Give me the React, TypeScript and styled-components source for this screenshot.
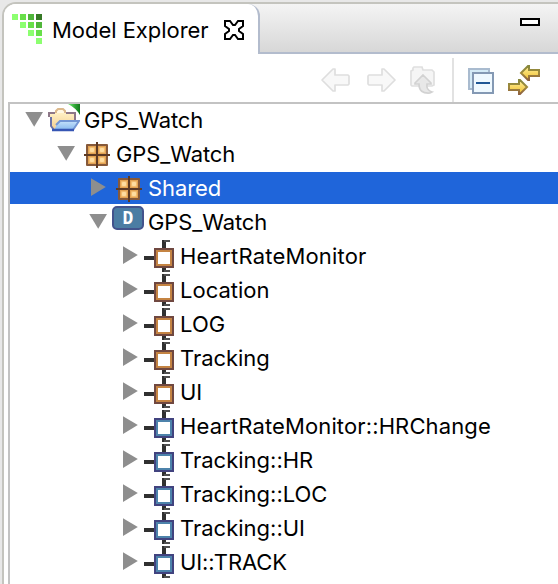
import React from "react";
import styled, { createGlobalStyle } from "styled-components";

const GlobalStyle = createGlobalStyle`
  * { box-sizing: border-box; }
  body { margin: 0; background: #e8e8e8; overflow: hidden; }
`;

const Window = styled.div`
  width: 558px;
  height: 584px;
  padding: 2px 0 0 2px;
  overflow: hidden;
  background: #e8e8e8;
  font-family: Inter, "Liberation Sans", sans-serif;
  font-size: 22px;
  color: #000;
`;

const ViewFrame = styled.div`
  display: flex;
  flex-direction: column;
  height: 582px;
  border: solid #c4c4be;
  border-width: 2px 0 0 2px;
  border-top-left-radius: 14px;
  background: #fff;
  overflow: hidden;
`;

const TabStrip = styled.div`
  display: flex;
  height: 50px;
  background: linear-gradient(#f4f4f4, #d6d6d6);
`;

const Tab = styled.div`
  display: flex;
  flex: none;
  align-items: center;
  width: 256px;
  height: 50px;
  padding: 0 14px 0 8px;
  border-right: 2px solid #b3bccd;
  border-top-right-radius: 12px;
  background: #fff;
`;

const TabTitle = styled.span`
  flex: 1;
  margin-left: 10px;
  line-height: 50px;
  padding-top: 2px;
  letter-spacing: -0.04px;
  white-space: nowrap;
`;

const StripRest = styled.div`
  display: flex;
  flex: 1;
  justify-content: flex-end;
  padding: 14px 18px 0 0;
  border-bottom: 2px solid #b3bccd;
`;

const MinimizeButton = styled.button`
  width: 20px;
  height: 8px;
  padding: 0;
  border: 2px solid #000;
  background: #fff;
`;

const Toolbar = styled.div`
  display: flex;
  flex: none;
  align-items: center;
  justify-content: flex-end;
  height: 48px;
  padding: 4px 18px 0 0;
`;

const ToolIcon = styled.svg<{ $gap?: number }>`
  flex: none;
  display: block;
  margin-right: ${(p) => p.$gap ?? 0}px;
`;

const CloseIcon = styled(ToolIcon)`
  margin-top: 2px;
`;

const Separator = styled.div`
  width: 2px;
  height: 44px;
  margin-right: 12px;
  background: #e2e2e2;
`;

const Tree = styled.div`
  flex: 1;
  margin-left: 4px;
  border: solid #c3c3c3;
  border-width: 2px 0 0 2px;
  overflow: hidden;
`;

const Row = styled.div<{ $level: number; $selected?: boolean }>`
  display: flex;
  height: 32px;
  margin-bottom: 2px;
  padding-left: ${(p) => p.$level * 32 + 14}px;
  background: ${(p) => (p.$selected ? "#1f65da" : "transparent")};
  color: ${(p) => (p.$selected ? "#fff" : "#000")};
`;

const Glyph = styled.svg<{ $width: number }>`
  flex: none;
  display: block;
  width: ${(p) => p.$width}px;
  height: 32px;
`;

const Label = styled.span<{ $spacing: number }>`
  margin-left: 4px;
  line-height: 32px;
  white-space: nowrap;
  letter-spacing: ${(p) => p.$spacing}px;
`;

const Twisty = ({ open }: { open: boolean }) => (
  <Glyph $width={24} viewBox="0 0 24 32">
    <path d={open ? "M1.3 8H19L10.2 22.8Z" : "M3 6.2V24L17.8 15Z"} fill="#8e8e8e" />
  </Glyph>
);

const ProjectIcon = () => (
  <Glyph $width={32} viewBox="0 0 32 32">
    <defs>
      <linearGradient id="folderBack" x2="0" y2="1">
        <stop stopColor="#fff0c4" />
        <stop offset="1" stopColor="#f3cf92" />
      </linearGradient>
      <linearGradient id="folderFront" x2="0" y2="1">
        <stop stopColor="#c5e2fb" />
        <stop offset="1" stopColor="#86b8ee" />
      </linearGradient>
      <linearGradient id="natureMark" x1="0" x2="1">
        <stop stopColor="#7af07a" />
        <stop offset="0.6" stopColor="#2ba332" />
        <stop offset="1" stopColor="#14751d" />
      </linearGradient>
    </defs>
    <path d="M8 9V7L10 5H15L17 7V9" fill="#fff8e4" stroke="#dcb98c" strokeWidth="2" />
    <path d="M3 9H27V18L8 25H4V13H1V9Z" fill="url(#folderBack)" />
    <path d="M1 13V9H7M18 9H27V16" fill="none" stroke="#8d7787" strokeWidth="2" />
    <path d="M3 13V22L6 26" fill="none" stroke="#6a72a8" strokeWidth="2" />
    <path d="M11 17H31L25 26H6Z" fill="url(#folderFront)" />
    <path d="M8 21L12 17H31L25 26" fill="none" stroke="#7396d4" strokeWidth="2" />
    <path d="M4 26H26" stroke="#3656b4" strokeWidth="2.5" />
    <path d="M20 0H32V11Q28 4 20 0Z" fill="url(#natureMark)" />
  </Glyph>
);

const PackageIcon = () => (
  <Glyph $width={32} viewBox="0 0 32 32">
    <rect x="6" y="6" width="22" height="22" rx="1" fill="#86593a" />
    {[8, 18].map((x) =>
      [8, 18].map((y) => (
        <g key={`${x}-${y}`}>
          <rect x={x} y={y} width="8" height="8" fill="#e3a252" />
          <rect x={x + 1} y={y + 1} width="6" height="6" rx="1" fill="#f3bd70" />
          <rect x={x + 2} y={y + 2} width="4" height="4" rx="1" fill="#ffdda0" />
        </g>
      ))
    )}
    <path d="M17 4V30M4 17H30" stroke="#5d3a24" strokeWidth="2" />
  </Glyph>
);

const DomainText = styled.text`
  font: bold 18px "DejaVu Sans Mono", monospace;
  fill: #fff;
`;

const DomainIcon = () => (
  <Glyph $width={32} viewBox="0 0 32 32">
    <rect x="1" y="1" width="30" height="22" rx="4" fill="#4b7da3" stroke="#43538c" strokeWidth="2" />
    <DomainText x="10.5" y="18">D</DomainText>
  </Glyph>
);

const PortIcon = ({ outer, inner }: { outer: string; inner: string }) => (
  <Glyph $width={32} viewBox="0 0 32 32">
    <path d="M0 18H10M20 0V8M20 28V32" stroke="#303030" strokeWidth="4" />
    <path d="M20 1H26M20 31H26" stroke="#505050" strokeWidth="2" />
    <rect x="11" y="9" width="18" height="18" fill="#fff" stroke={outer} strokeWidth="2" />
    <rect x="13" y="11" width="14" height="14" fill="#fff" stroke={inner} strokeWidth="2" />
  </Glyph>
);

type Kind = "project" | "package" | "domain" | "component" | "interface";

const icons: Record<Kind, React.ReactElement> = {
  project: <ProjectIcon />,
  package: <PackageIcon />,
  domain: <DomainIcon />,
  component: <PortIcon outer="#704840" inner="#c58443" />,
  interface: <PortIcon outer="#41437f" inner="#4d83ab" />,
};

type Node = { label: string; kind: Kind; level: number; open?: boolean; selected?: boolean; spacing?: number };

const nodes: Node[] = [
  { label: "GPS_Watch", kind: "project", level: 0, open: true, spacing: -0.1 },
  { label: "GPS_Watch", kind: "package", level: 1, open: true, spacing: -0.1 },
  { label: "Shared", kind: "package", level: 2, selected: true, spacing: -0.08 },
  { label: "GPS_Watch", kind: "domain", level: 2, open: true, spacing: -0.1 },
  { label: "HeartRateMonitor", kind: "component", level: 3, spacing: 0.18 },
  { label: "Location", kind: "component", level: 3 },
  { label: "LOG", kind: "component", level: 3, spacing: 0.1 },
  { label: "Tracking", kind: "component", level: 3, spacing: -0.05 },
  { label: "UI", kind: "component", level: 3 },
  { label: "HeartRateMonitor::HRChange", kind: "interface", level: 3, spacing: 0.13 },
  { label: "Tracking::HR", kind: "interface", level: 3 },
  { label: "Tracking::LOC", kind: "interface", level: 3 },
  { label: "Tracking::UI", kind: "interface", level: 3 },
  { label: "UI::TRACK", kind: "interface", level: 3, spacing: -0.1 },
];

const greens = ["#8cff70", "#68df49", "#50b63b", "#367926"];
const logo = [
  [0, 0, 0], [1, 0, 1], [2, 0, 2], [3, 0, 3],
  [1, 1, 0], [2, 1, 1], [3, 1, 2],
  [2, 2, 0], [3, 2, 1], [3, 3, 0],
];

const ArrowIcon = ({ forward, gap }: { forward?: boolean; gap: number }) => (
  <ToolIcon $gap={gap} width="32" height="32" viewBox="0 0 32 32">
    <path
      d="M2 16L13 5H15V11H28L29 12V20L28 21H15V27H13Z"
      transform={forward ? "translate(33 0) scale(-1 1)" : undefined}
      fill="#f8f8f8"
      stroke="#dedede"
      strokeWidth="1.7"
      strokeLinejoin="round"
    />
  </ToolIcon>
);

export default function App() {
  return (
    <Window>
      <GlobalStyle />
      <ViewFrame>
        <TabStrip>
          <Tab>
            <ToolIcon width="30" height="30" viewBox="0 0 30 30">
              {logo.map(([x, y, c]) => (
                <rect key={`${x}${y}`} x={x * 8} y={y * 8} width="6" height="6" fill={greens[c]} />
              ))}
            </ToolIcon>
            <TabTitle>Model Explorer</TabTitle>
            <CloseIcon width="20" height="20" viewBox="0 0 20 20">
              <path
                d="M1 1H6L9 5H11L14 1H19V6L15 9V11L19 14V19H14L11 15H9L6 19H1V14L5 11V9L1 6Z"
                fill="#fff"
                stroke="#000"
                strokeWidth="2"
              />
            </CloseIcon>
          </Tab>
          <StripRest>
            <MinimizeButton aria-label="Minimize" />
          </StripRest>
        </TabStrip>
        <Toolbar>
          <ArrowIcon gap={12} />
          <ArrowIcon forward gap={12} />
          <ToolIcon $gap={12} width="32" height="32" viewBox="0 0 32 32">
            <path d="M3 21V7L5 6V4L6 3H14L15 6H24L26 8V21L24 22H4Z" fill="#f5f5f5" stroke="#dfdfdf" strokeWidth="1.7" />
            <path
              d="M15 11L23 19V20H19Q18 26 24 28L22 29Q11 30 11 20H7V19Z"
              fill="#e8e8e8"
              stroke="#d2d2d2"
              strokeWidth="1.7"
            />
          </ToolIcon>
          <Separator />
          <ToolIcon $gap={10} width="32" height="32" viewBox="0 0 32 32">
            <rect x="3" y="5" width="20" height="20" fill="#d4ebf7" stroke="#a9bbcf" strokeWidth="2" />
            <rect x="7" y="9" width="20" height="20" fill="#eff9ff" stroke="#8499b4" strokeWidth="2" />
            <path d="M10 19H24" stroke="#1f5795" strokeWidth="2" />
          </ToolIcon>
          <ToolIcon width="32" height="32" viewBox="0 0 32 32">
            <defs>
              <linearGradient id="linkEdge" x2="0" y2="1">
                <stop stopColor="#87883c" />
                <stop offset="0.5" stopColor="#a08a3c" />
                <stop offset="1" stopColor="#8f6240" />
              </linearGradient>
              <linearGradient id="linkFill" x2="0" y2="1">
                <stop stopColor="#fff09a" />
                <stop offset="1" stopColor="#f0c030" />
              </linearGradient>
            </defs>
            <path d="M13 9L20 2H21V6H31V12H21V16H20Z" fill="url(#linkFill)" stroke="url(#linkEdge)" strokeWidth="2" />
            <path d="M19 23L12 16H11V20H1V26H11V30H12Z" fill="url(#linkFill)" stroke="url(#linkEdge)" strokeWidth="2" />
          </ToolIcon>
        </Toolbar>
        <Tree>
          {nodes.map((n, i) => (
            <Row key={i} $level={n.level} $selected={n.selected}>
              <Twisty open={!!n.open} />
              {icons[n.kind]}
              <Label $spacing={n.spacing ?? 0}>{n.label}</Label>
            </Row>
          ))}
        </Tree>
      </ViewFrame>
    </Window>
  );
}
